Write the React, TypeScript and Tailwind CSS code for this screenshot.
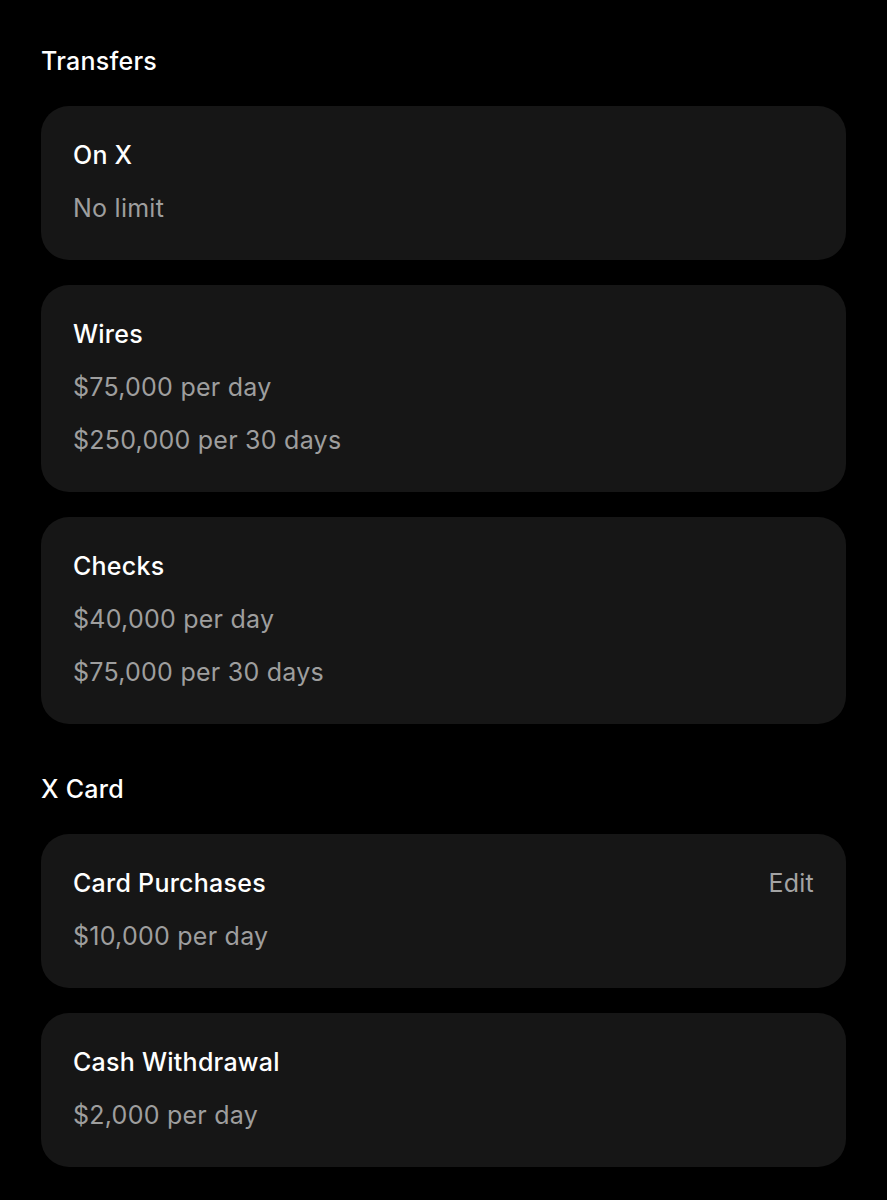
import React from "react";

type Card = { title: string; lines: string[]; edit?: boolean };

const sections: { name: string; cards: Card[] }[] = [
  {
    name: "Transfers",
    cards: [
      { title: "On X", lines: ["No limit"] },
      { title: "Wires", lines: ["$75,000 per day", "$250,000 per 30 days"] },
      { title: "Checks", lines: ["$40,000 per day", "$75,000 per 30 days"] },
    ],
  },
  {
    name: "X Card",
    cards: [
      { title: "Card Purchases", lines: ["$10,000 per day"], edit: true },
      { title: "Cash Withdrawal", lines: ["$2,000 per day"] },
    ],
  },
];

export default function App() {
  return (
    <div
      className="min-h-[1200px] w-full bg-black px-[41px] pt-[41px] text-[25px] tracking-[0.01em] antialiased"
      style={{ fontFamily: "Inter, 'Noto Sans', sans-serif" }}
    >
      {sections.map((s, si) => (
        <div key={s.name} className={si > 0 ? "mt-[45px]" : ""}>
          <div className="mb-[25px] leading-[40px] font-medium text-white">{s.name}</div>
          <div className="flex flex-col gap-[25px]">
            {s.cards.map((c) => (
              <div key={c.title} className="w-[805px] rounded-[28px] bg-[#161616] px-8 pt-[23px] pb-[25px]">
                <div className="flex items-center justify-between leading-[53px]">
                  <span className="font-medium text-white">{c.title}</span>
                  {c.edit && <span className="text-[#a3a3a3]">Edit</span>}
                </div>
                {c.lines.map((l) => (
                  <div key={l} className="leading-[53px] text-[#9e9e9e]">
                    {l}
                  </div>
                ))}
              </div>
            ))}
          </div>
        </div>
      ))}
    </div>
  );
}
